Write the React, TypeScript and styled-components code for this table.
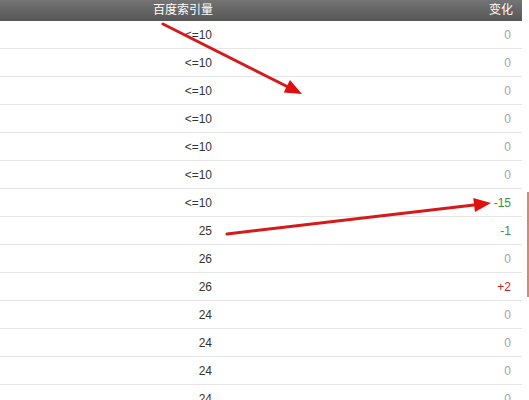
import { Fragment } from "react";
import styled, { createGlobalStyle } from "styled-components";

type Row = { index: string; change: number };

const rows: Row[] = [
  { index: "<=10", change: 0 },
  { index: "<=10", change: 0 },
  { index: "<=10", change: 0 },
  { index: "<=10", change: 0 },
  { index: "<=10", change: 0 },
  { index: "<=10", change: 0 },
  { index: "<=10", change: -15 },
  { index: "25", change: -1 },
  { index: "26", change: 0 },
  { index: "26", change: 2 },
  { index: "24", change: 0 },
  { index: "24", change: 0 },
  { index: "24", change: 0 },
  { index: "24", change: 0 },
];

const Global = createGlobalStyle`
  html, body {
    margin: 0;
    padding: 0;
    background: #fff;
    overflow: hidden;
  }
  body {
    font-family: "Liberation Sans", Arial, "Noto Sans CJK SC", sans-serif;
    font-size: 12px;
  }
`;

const Page = styled.div`
  position: relative;
  width: 529px;
  height: 400px;
  overflow: hidden;
`;

const Table = styled.div`
  width: 522px;
  display: grid;
  grid-template-columns: 222px 1fr;
`;

const Head = styled.div`
  height: 21px;
  line-height: 17px;
  padding-right: 9px;
  text-align: right;
  color: #fff;
  background: linear-gradient(#747474, #565656);
  font-family: "Noto Sans CJK SC", "Liberation Sans", sans-serif;
  font-size: 12px;
  &:last-child {
    padding-right: 11px;
  }
`;

const Cell = styled.div`
  height: 28px;
  line-height: 29px;
  box-sizing: border-box;
  border-bottom: 1px solid #e6e6e6;
  text-align: right;
  padding-right: 10px;
  color: #333;
`;

const Change = styled(Cell)<{ $tone: "zero" | "down" | "up" }>`
  padding-right: 11px;
  color: ${(p) => (p.$tone === "down" ? "#3c8f3c" : p.$tone === "up" ? "#c81e1e" : "#a5a5a5")};
`;

const EdgeMark = styled.div`
  position: absolute;
  left: 527px;
  top: 192px;
  width: 2px;
  height: 105px;
  background: #d58a6a;
`;

const Overlay = styled.svg`
  position: absolute;
  left: 0;
  top: 0;
  pointer-events: none;
`;

function fmt(n: number) {
  if (n > 0) return `+${n}`;
  return String(n);
}

function Arrow({ x1, y1, x2, y2 }: { x1: number; y1: number; x2: number; y2: number }) {
  const len = Math.hypot(x2 - x1, y2 - y1);
  const ux = (x2 - x1) / len;
  const uy = (y2 - y1) / len;
  const head = 17;
  const half = 7;
  const bx = x2 - ux * head;
  const by = y2 - uy * head;
  const pts = `${x2},${y2} ${bx - uy * half},${by + ux * half} ${bx + uy * half},${by - ux * half}`;
  return (
    <g>
      <line x1={x1} y1={y1} x2={bx + ux * 2} y2={by + uy * 2} stroke="#d41a1a" strokeWidth={3} strokeLinecap="round" />
      <polygon points={pts} fill="#e01010" />
    </g>
  );
}

export default function App() {
  return (
    <Page>
      <Global />
      <Table>
        <Head>百度索引量</Head>
        <Head>变化</Head>
        {rows.map((r, i) => (
          <Fragment key={i}>
            <Cell>{r.index}</Cell>
            <Change $tone={r.change < 0 ? "down" : r.change > 0 ? "up" : "zero"}>{fmt(r.change)}</Change>
          </Fragment>
        ))}
      </Table>
      <EdgeMark />
      <Overlay width={529} height={400}>
        <Arrow x1={163} y1={24} x2={302} y2={94} />
        <Arrow x1={227} y1={234} x2={491} y2={203} />
      </Overlay>
    </Page>
  );
}
